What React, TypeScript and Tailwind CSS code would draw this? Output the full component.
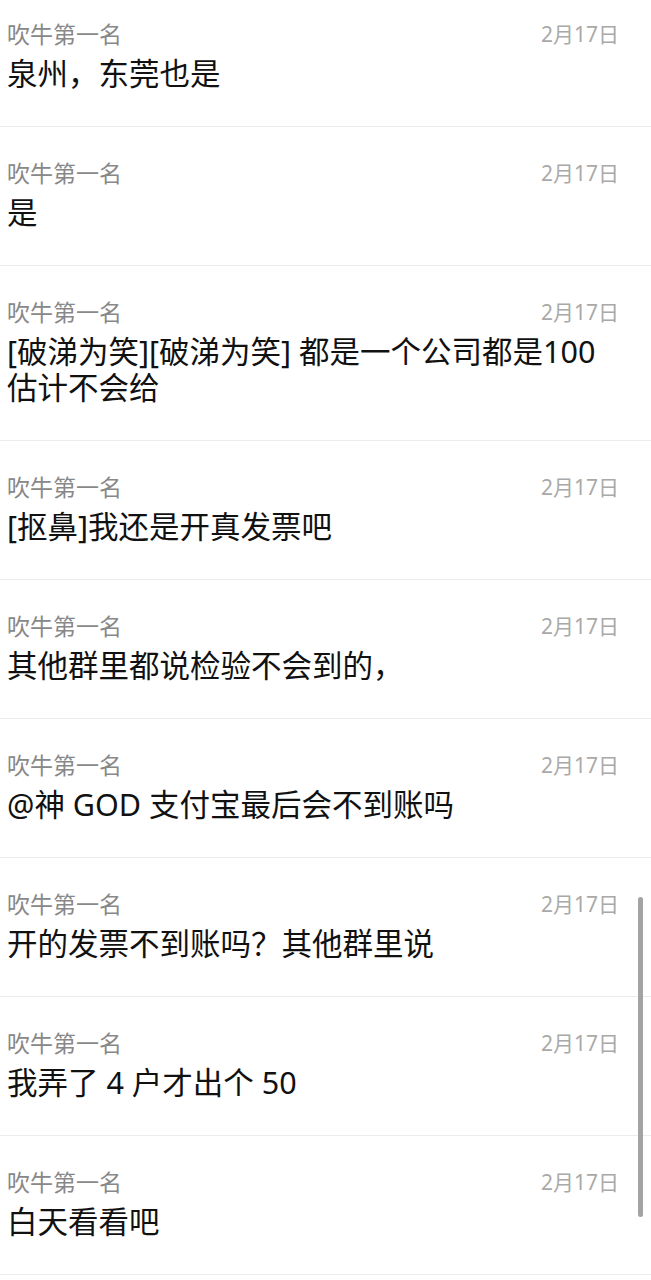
const messages = [
  { text: "泉州，东莞也是" },
  { text: "是" },
  { text: "[破涕为笑][破涕为笑] 都是一个公司都是100\n估计不会给" },
  { text: "[抠鼻]我还是开真发票吧" },
  { text: "其他群里都说检验不会到的，" },
  { text: "@神 GOD 支付宝最后会不到账吗" },
  { text: "开的发票不到账吗？其他群里说" },
  { text: "我弄了 4 户才出个 50" },
  { text: "白天看看吧" },
];

const MessageRow = ({ text, first }: { text: string; first?: boolean }) => (
  <div
    className={`border-b border-[#ececec] pl-[7px] pr-[32px] pb-[35px] ${
      first ? "pt-[21px]" : "pt-[33px]"
    }`}
  >
    <div className="flex items-center justify-between h-[26px]">
      <span className="text-[23px] leading-[26px] text-[#888888]">吹牛第一名</span>
      <span className="text-[21px] leading-[26px] text-[#a9a9a9]">2月17日</span>
    </div>
    <p className="mt-[8px] text-[30.5px] leading-[36px] text-[#111111] whitespace-pre-line">
      {text}
    </p>
  </div>
);

const App = () => {
  return (
    <div
      className="relative min-h-screen bg-white overflow-hidden"
      style={{ fontFamily: '"Noto Sans", "Noto Sans CJK SC", sans-serif' }}
    >
      {messages.map((m, i) => (
        <MessageRow key={i} text={m.text} first={i === 0} />
      ))}

      {/* scroll indicator */}
      <div className="absolute left-[638px] top-[897px] w-[5px] h-[320px] rounded-full bg-[#a3a3a3]" />
    </div>
  );
};

export default App;
